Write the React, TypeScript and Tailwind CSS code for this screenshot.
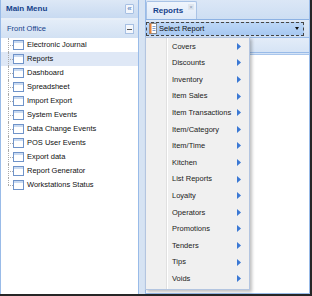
import { Fragment } from "react";

const treeItems = [
  "Electronic Journal",
  "Reports",
  "Dashboard",
  "Spreadsheet",
  "Import Export",
  "System Events",
  "Data Change Events",
  "POS User Events",
  "Export data",
  "Report Generator",
  "Workstations Status",
];

const reportGroups = [
  "Covers",
  "Discounts",
  "Inventory",
  "Item Sales",
  "Item Transactions",
  "Item/Category",
  "Item/Time",
  "Kitchen",
  "List Reports",
  "Loyalty",
  "Operators",
  "Promotions",
  "Tenders",
  "Tips",
  "Voids",
];

const font = { fontFamily: '"Liberation Sans", Arial, sans-serif' };

const NodeIcon = () => (
  <svg width="11" height="10" viewBox="0 0 11 10" className="shrink-0">
    <rect x="0.5" y="0.5" width="10" height="9" fill="#fff" stroke="#6f93c9" />
    <rect x="1" y="1" width="9" height="2" fill="#c9daf1" />
  </svg>
);

const SubArrow = () => (
  <svg width="4" height="7" viewBox="0 0 4 7">
    <polygon points="0,0 4,3.5 0,7" fill="#3a78d4" />
  </svg>
);

const ReportIcon = () => (
  <svg width="8" height="11" viewBox="0 0 8 11" className="shrink-0">
    <rect x="0.5" y="0.5" width="7" height="10" fill="#fff" stroke="#8a8a8a" />
    <rect x="0.5" y="0.5" width="2" height="10" fill="#e2813a" />
    <line x1="3.5" y1="3.5" x2="6.5" y2="3.5" stroke="#7a9cd0" />
    <line x1="3.5" y1="5.5" x2="6.5" y2="5.5" stroke="#7a9cd0" />
    <line x1="3.5" y1="7.5" x2="6.5" y2="7.5" stroke="#7a9cd0" />
  </svg>
);

function MainMenu() {
  return (
    <div className="flex w-[139px] shrink-0 flex-col border-x border-[#99bbe8] bg-white">
      <div className="flex h-[18px] items-center justify-between bg-gradient-to-b from-[#dde8f6] to-[#c8daf1] pl-[5px] pr-[4px]">
        <span className="text-[8px] font-bold text-[#15428b]">Main Menu</span>
        <span className="flex h-[10px] w-[9px] items-center justify-center rounded-[1px] border border-[#a7c0e3] bg-[#f2f6fc] text-[8px] leading-none text-[#3c6bb0]">
          «
        </span>
      </div>
      <div className="flex h-[20px] items-center justify-between border-t-2 border-[#e8eff8] bg-gradient-to-b from-[#e4edf8] to-[#d2e1f3] pl-[6px] pr-[4px]">
        <span className="text-[7.5px] text-[#15428b]">Front Office</span>
        <span className="flex h-[10px] w-[9px] items-center justify-center border border-[#a7c0e3] bg-[#f4f7fc]">
          <span className="h-px w-[5px] bg-[#555]" />
        </span>
      </div>
      <div className="flex flex-col">
        {treeItems.map((item, i) => {
          const last = i === treeItems.length - 1;
          return (
            <div
              key={item}
              className={`flex h-[14px] items-center ${item === "Reports" ? "bg-[#dfe8f6]" : ""}`}
            >
              <span className="relative ml-[7px] h-full w-[5px] shrink-0">
                <span
                  className={`absolute left-0 top-0 border-l border-dotted border-[#aaa] ${last ? "h-[7px]" : "h-full"}`}
                />
                <span className="absolute left-0 top-[7px] w-[5px] border-t border-dotted border-[#aaa]" />
              </span>
              <NodeIcon />
              <span className="ml-[3px] whitespace-nowrap text-[7.5px] text-[#111]">{item}</span>
            </div>
          );
        })}
      </div>
    </div>
  );
}

function ReportsPanel() {
  return (
    <div className="flex flex-1 flex-col border-x border-b border-[#99bbe8] bg-white">
      <div className="flex h-[20px] items-end border-b border-[#8db2e3] bg-gradient-to-b from-[#dbe7f6] to-[#cddef3]">
        <div className="relative flex h-[18px] w-[51px] items-center rounded-t-[2px] border-x border-t border-[#a9c3e6] bg-gradient-to-b from-[#f0f5fc] to-[#dde9f8] pl-[6px]">
          <span className="text-[8px] font-bold text-[#15428b]">Reports</span>
          <span className="absolute right-[2px] top-[2px] flex h-[6px] w-[6px] items-center justify-center bg-[#dfe6ef] text-[6px] leading-none text-[#8a9bb3]">
            ×
          </span>
        </div>
      </div>
      <div className="flex h-[17px] items-center bg-gradient-to-b from-[#dfe9f6] to-[#d0dff2] pr-[5px]">
        <div className="flex h-[14px] flex-1 items-center border border-dashed border-[#444] bg-gradient-to-b from-[#bcd6f6] to-[#a7c8f1] pl-[2px] pr-[4px]">
          <ReportIcon />
          <span className="ml-[2px] flex-1 text-[7.5px] text-[#111]">Select Report</span>
          <svg width="4" height="3" viewBox="0 0 4 3">
            <polygon points="0,0 4,0 2,3" fill="#111" />
          </svg>
        </div>
      </div>
      <div className="h-[16px] border-y border-[#99bbe8] bg-gradient-to-b from-[#e3ecf8] to-[#d6e4f5]" />
      <div className="h-[2px] border-b border-[#a9c6ec] bg-[#d4e3f6]" />
      <div className="flex-1 bg-white" />
    </div>
  );
}

function ReportMenu() {
  return (
    <div className="absolute left-[145px] top-[37px] h-[253px] w-[105px] border border-[#b3c5e0] bg-[#f0f0f0] shadow-[2px_2px_3px_rgba(0,0,0,0.25)]">
      <div className="absolute bottom-0 left-[20px] top-0 w-[2px] border-l border-[#e0e0e0] bg-white" />
      <div className="relative flex flex-col">
        {reportGroups.map((g) => (
          <Fragment key={g}>
            <div className="flex h-[16.6px] items-center justify-between pl-[26px] pr-[8px]">
              <span className="text-[7.5px] text-[#222]">{g}</span>
              <SubArrow />
            </div>
          </Fragment>
        ))}
      </div>
    </div>
  );
}

export default function App() {
  return (
    <div
      className="relative flex h-[296px] w-[312px] border-b-2 border-r-2 border-[#262626] bg-[#d2e0f2]"
      style={font}
    >
      <MainMenu />
      <div className="w-[6px] shrink-0 bg-[#d6e3f3]" />
      <ReportsPanel />
      <ReportMenu />
    </div>
  );
}
